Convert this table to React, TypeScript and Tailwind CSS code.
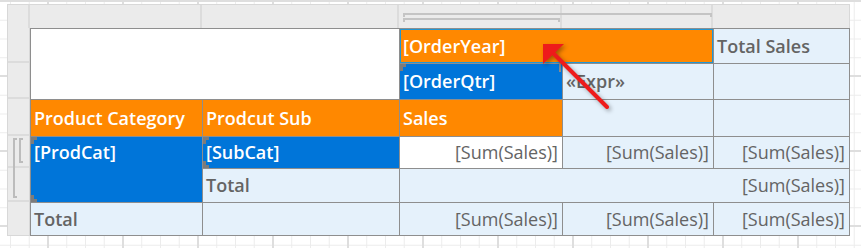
import type { ReactNode } from 'react';

type CellProps = {
  children?: ReactNode;
  className?: string;
};

function Cell({ children, className = '' }: CellProps) {
  return (
    <div className={`relative flex items-center overflow-hidden whitespace-nowrap pl-[3px] ${className}`}>
      {children}
    </div>
  );
}

const head = 'bg-[#ff8800] font-semibold text-white';
const group = 'bg-[#0075d9] font-semibold text-white';
const pale = 'bg-[#e5f1fb] text-[#646464]';
const sum = 'justify-end pr-[4px]';

function Corner({ className }: { className: string }) {
  return <span className={`absolute h-[7px] w-[6px] border-[#7c7c7c] ${className}`} />;
}

export default function App() {
  return (
    <div className="relative h-[248px] w-[861px] overflow-hidden bg-white bg-[linear-gradient(to_right,#dedede_2px,transparent_2px),linear-gradient(to_bottom,#dedede_2px,transparent_2px),linear-gradient(to_right,#ececec_1px,transparent_1px),linear-gradient(to_bottom,#ececec_1px,transparent_1px)] [background-size:75px_75px,75px_75px,18.75px_18.75px,18.75px_18.75px] [background-position:47px_0px,47px_0px,10px_1px,10px_1px] pl-[7px] pt-[4px] font-['Open_Sans',sans-serif] text-[18px]">
      {/* column gutter */}
      <div className="relative flex h-[24px] w-[843px] border border-b-0 border-[#d8d8d8] bg-[#ebebeb]">
        <div className="w-[22px] border-r-2 border-[#dcdcdc]" />
        <div className="w-[172px] border-r-2 border-[#dcdcdc]" />
        <div className="w-[197px] border-r-2 border-[#dcdcdc]" />
        <div className="w-[163px] border-r-2 border-[#dcdcdc]" />
        <div className="w-[151px] border-r-2 border-[#dcdcdc]" />
        <div className="flex-1" />
        <span className="absolute left-[395px] top-[8px] h-[4px] w-[309px] border-x-2 border-t-2 border-[#c4c4c4]" />
        <span className="absolute left-[395px] top-[13px] h-[4px] w-[157px] border-x-2 border-t-2 border-[#c4c4c4]" />
      </div>

      <div className="flex">
        {/* row gutter */}
        <div className="relative flex w-[23px] flex-col border-x border-b border-[#d8d8d8] bg-[#ebebeb]">
          <div className="h-[35px] border-b-2 border-[#dcdcdc]" />
          <div className="h-[36px] border-b-2 border-[#dcdcdc]" />
          <div className="h-[37px] border-b-2 border-[#dcdcdc]" />
          <div className="h-[32px] border-b-2 border-[#dcdcdc]" />
          <div className="h-[34px] border-b-2 border-[#dcdcdc]" />
          <div className="flex-1" />
          <span className="absolute left-[5px] top-[110px] h-[60px] w-[4px] border-y-2 border-l-2 border-[#bcbcbc]" />
          <span className="absolute left-[11px] top-[110px] h-[25px] w-[4px] border-y-2 border-l-2 border-[#bcbcbc]" />
        </div>

        {/* tablix */}
        <div className="grid grid-cols-[171px_196px_162px_150px_135px] grid-rows-[34px_35px_36px_31px_33px_32px] gap-px border border-[#8e8e8e] bg-[#8e8e8e]">
          <div className="col-span-2 row-span-2 bg-white" />
          <Cell className={`col-span-2 ${head}`}>
            [OrderYear]
            <span className="absolute -inset-px border-2 border-[#2196d3]" />
          </Cell>
          <Cell className={`${pale} font-semibold`}>Total Sales</Cell>

          <Cell className={group}>
            [OrderQtr]
            <Corner className="left-0 top-0 border-l-[3px] border-t-[3px]" />
            <span className="absolute right-[1px] top-0 h-[8px] w-[2px] bg-[#8a8a8a]" />
          </Cell>
          <Cell className={`${pale} font-semibold`}>«Expr»</Cell>
          <Cell className={pale} />

          <Cell className={head}>Product Category</Cell>
          <Cell className={head}>Prodcut Sub</Cell>
          <Cell className={head}>Sales</Cell>
          <Cell className={pale} />
          <Cell className={pale} />

          <Cell className={`row-span-2 items-start pt-[2px] ${group}`}>
            [ProdCat]
            <Corner className="left-0 top-0 border-l-[3px] border-t-[3px]" />
            <Corner className="bottom-0 left-0 border-b-[3px] border-l-[3px]" />
          </Cell>
          <Cell className={group}>
            [SubCat]
            <Corner className="left-0 top-0 border-l-[3px] border-t-[3px]" />
            <Corner className="bottom-0 left-0 border-b-[3px] border-l-[3px]" />
          </Cell>
          <Cell className={`bg-white text-[#646464] ${sum}`}>[Sum(Sales)]</Cell>
          <Cell className={`${pale} ${sum}`}>[Sum(Sales)]</Cell>
          <Cell className={`${pale} ${sum}`}>[Sum(Sales)]</Cell>

          <Cell className={`${pale} font-semibold`}>Total</Cell>
          <Cell className={`col-span-3 ${pale} ${sum}`}>[Sum(Sales)]</Cell>

          <Cell className={`${pale} font-semibold`}>Total</Cell>
          <Cell className={pale} />
          <Cell className={`${pale} ${sum}`}>[Sum(Sales)]</Cell>
          <Cell className={`${pale} ${sum}`}>[Sum(Sales)]</Cell>
          <Cell className={`${pale} ${sum}`}>[Sum(Sales)]</Cell>
        </div>
      </div>

      {/* callout arrow */}
      <svg
        className="pointer-events-none absolute left-0 top-0 drop-shadow-[2px_2px_2px_rgba(0,0,0,0.35)]"
        width="861"
        height="248"
        viewBox="0 0 861 248"
      >
        <line x1="607" y1="107" x2="553" y2="53" stroke="#ee1b1b" strokeWidth="4" strokeLinecap="round" />
        <polygon points="543,44 564,44 543,64" fill="#ee1b1b" />
      </svg>
    </div>
  );
}
